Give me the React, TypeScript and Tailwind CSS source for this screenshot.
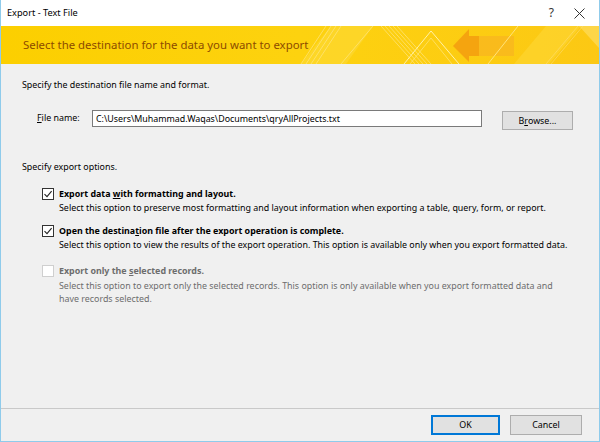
import React from "react";

const font = { fontFamily: '"Noto Sans", "Open Sans", Arial, sans-serif' };

function Check({ checked, disabled }: { checked?: boolean; disabled?: boolean }) {
  return (
    <div
      className={`w-[12px] h-[12px] shrink-0 border bg-white flex items-center justify-center ${
        disabled ? "border-[#cfcfcf]" : "border-[#333333]"
      }`}
    >
      {checked && (
        <svg width="10" height="10" viewBox="0 0 10 10">
          <path d="M1.5 5.2 L4 7.6 L8.6 2.2" fill="none" stroke="#222" strokeWidth="1.1" />
        </svg>
      )}
    </div>
  );
}

function Banner() {
  return (
    <div className="relative h-[38px] bg-[#fdd10f] flex items-center px-[22px] overflow-hidden shrink-0">
      <svg className="absolute inset-0" width="598" height="38" viewBox="0 0 598 38">
        <defs>
          <linearGradient id="bg" x1="0" x2="1" y1="0" y2="0">
            <stop offset="0" stopColor="#fccf00" />
            <stop offset="0.5" stopColor="#fdd20f" />
            <stop offset="1" stopColor="#fcc814" />
          </linearGradient>
        </defs>
        <rect x="0" y="0" width="598" height="38" fill="url(#bg)" />
        <polygon points="300,38 330,0 372,0 345,38" fill="#fdda3a" opacity="0.55" />
        <g stroke="#ffe680" strokeWidth="0.8" opacity="0.9">
          <line x1="300" y1="38" x2="325" y2="0" />
          <line x1="305" y1="38" x2="330" y2="0" />
          <line x1="310" y1="38" x2="335" y2="0" />
          <line x1="315" y1="38" x2="340" y2="0" />
          <line x1="340" y1="38" x2="372" y2="0" />
          <line x1="380" y1="0" x2="414" y2="38" />
          <line x1="384" y1="0" x2="418" y2="38" />
          <line x1="388" y1="0" x2="422" y2="38" />
          <line x1="392" y1="0" x2="426" y2="38" />
          <line x1="396" y1="0" x2="430" y2="38" />
        </g>
        <polyline points="403,38 430,5 458,38" fill="none" stroke="#fff1a8" strokeWidth="1" />
        <polyline points="409,38 430,12 451,38" fill="none" stroke="#ffe680" strokeWidth="0.7" />
        <polygon points="452,20 468,3 468,10 478,10 478,30 468,30 468,36" fill="#f4a010" opacity="0.9" />
        <polygon points="478,10 513,10 513,30 478,30" fill="#f8b520" opacity="0.75" />
        <line x1="487" y1="38" x2="517" y2="0" stroke="#ffe27a" strokeWidth="1" />
        <polygon points="513,38 545,0 580,0 548,38" fill="#fdd735" opacity="0.6" />
        <g stroke="#ffe07a" strokeWidth="0.7" opacity="0.8">
          <line x1="545" y1="38" x2="577" y2="0" />
          <line x1="550" y1="38" x2="582" y2="0" />
        </g>
        <polygon points="578,0 598,0 598,22" fill="#fde06a" opacity="0.6" />
      </svg>
      <span className="relative text-[11.4px] text-[#8c4b00]">
        Select the destination for the data you want to export
      </span>
    </div>
  );
}

export default function App() {
  return (
    <div
      style={font}
      className="w-[600px] h-[442px] bg-[#f0f0f0] border-x border-b border-[#8fcbeb] flex flex-col text-[8.9px] text-black leading-[12px] whitespace-nowrap"
    >
      <div className="h-[26px] bg-white flex items-center justify-between pl-[6px] pr-[14px] shrink-0">
        <span className="text-[9.2px]">Export - Text File</span>
        <div className="flex items-center gap-[20px]">
          <span className="text-[12px] text-[#333]">?</span>
          <svg width="11" height="11" viewBox="0 0 11 11">
            <path d="M0.5 0.5 L10.5 10.5 M10.5 0.5 L0.5 10.5" stroke="#333" strokeWidth="1" />
          </svg>
        </div>
      </div>
      <Banner />
      <div className="flex-1 flex flex-col pl-[21px] pr-[25px]">
        <div className="mt-[15px]">Specify the destination file name and format.</div>
        <div className="mt-[19px] flex items-start">
          <span className="ml-[15px] mt-[2px] w-[55px]">
            <span className="underline">F</span>ile name:
          </span>
          <div className="w-[390px] h-[17px] bg-white border border-[#7a7a7a] flex items-center px-[3px]">
            C:\Users\Muhammad.Waqas\Documents\qryAllProjects.txt
          </div>
          <div className="ml-[20px] mt-[1px] w-[71px] h-[19px] bg-[#e1e1e1] border border-[#adadad] flex items-center justify-center">
            B<span className="underline">r</span>owse...
          </div>
        </div>
        <div className="mt-[31px]">Specify export options.</div>
        <div className="mt-[15px] ml-[20px] flex flex-col">
          <div className="flex items-center gap-[5px]">
            <Check checked />
            <span className="font-bold">
              Export data <span className="underline">w</span>ith formatting and layout.
            </span>
          </div>
          <div className="ml-[17px] mt-[2px]">
            Select this option to preserve most formatting and layout information when exporting a table, query, form, or report.
          </div>
          <div className="flex items-center gap-[5px] mt-[11px]">
            <Check checked />
            <span className="font-bold">
              Open the destina<span className="underline">t</span>ion file after the export operation is complete.
            </span>
          </div>
          <div className="ml-[17px] mt-[2px]">
            Select this option to view the results of the export operation. This option is available only when you export formatted data.
          </div>
          <div className="flex items-center gap-[5px] mt-[14px] text-[#6d6d6d]">
            <Check disabled />
            <span className="font-bold">
              Export only the <span className="underline">s</span>elected records.
            </span>
          </div>
          <div className="ml-[17px] mt-[2px] leading-[13px] text-[#6d6d6d]">
            Select this option to export only the selected records. This option is only available when you export formatted data and
            <br />
            have records selected.
          </div>
        </div>
      </div>
      <div className="h-[1px] bg-[#c9c9c9] shrink-0" />
      <div className="h-[32px] shrink-0 flex items-center justify-end pr-[17px] gap-[10px]">
        <div className="w-[69px] h-[20px] bg-[#e1e1e1] border-2 border-[#0078d7] flex items-center justify-center">
          OK
        </div>
        <div className="w-[72px] h-[20px] bg-[#e1e1e1] border border-[#adadad] flex items-center justify-center">
          Cancel
        </div>
      </div>
    </div>
  );
}
